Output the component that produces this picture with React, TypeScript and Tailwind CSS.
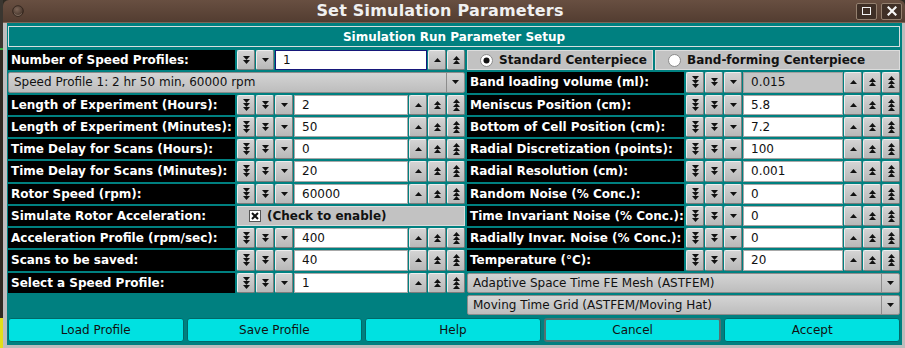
import React from 'react'

const FONT = { fontFamily: '"DejaVu Sans", "Liberation Sans", sans-serif' }

function Arrows({ n, up }: { n: number; up?: boolean }) {
  const tris = []
  for (let i = 0; i < n; i++) {
    const y = i * 4
    tris.push(
      <polygon
        key={i}
        points={up ? `3.5,${y} 0,${y + 4} 7,${y + 4}` : `0,${y} 7,${y} 3.5,${y + 4}`}
        fill="#111"
      />
    )
  }
  return (
    <svg width="7" height={n * 4} viewBox={`0 0 7 ${n * 4}`}>
      {tris}
    </svg>
  )
}

function StepButton({ n, up }: { n: number; up?: boolean }) {
  return (
    <div className="w-[18px] shrink-0 flex items-center justify-center rounded-[2px] bg-gradient-to-b from-[#d4d4d4] to-[#b8b8b8] border border-t-[#ededed] border-l-[#ededed] border-r-[#7c7c7c] border-b-[#7c7c7c]">
      <Arrows n={n} up={up} />
    </div>
  )
}

interface CounterProps {
  value: string
  steps?: number
  focused?: boolean
  disabled?: boolean
}

function Counter({ value, steps = 3, focused, disabled }: CounterProps) {
  const downs = steps === 3 ? [3, 2, 1] : [2, 1]
  const ups = steps === 3 ? [1, 2, 3] : [1, 2]
  return (
    <div className="flex gap-[1px] h-full">
      {downs.map((n) => (
        <StepButton key={'d' + n} n={n} />
      ))}
      <div
        className={
          'flex-1 min-w-0 flex items-center pl-[7px] text-[12px] text-[#111] ' +
          (focused
            ? 'bg-white border border-[#17177a]'
            : disabled
              ? 'bg-[#c4c4c4] border border-[#a0a0a0]'
              : 'bg-white border border-[#a8a8a8]')
        }
      >
        {value}
      </div>
      {ups.map((n) => (
        <StepButton key={'u' + n} n={n} up />
      ))}
    </div>
  )
}

function Label({ text }: { text: string }) {
  return (
    <div className="bg-black text-white font-bold text-[12px] pl-[3px] flex items-center whitespace-nowrap overflow-hidden">
      {text}
    </div>
  )
}

function Combo({ text }: { text: string }) {
  return (
    <div className="flex h-full rounded-[2px] bg-gradient-to-b from-[#d4d4d4] to-[#bdbdbd] border border-[#8c8c8c]">
      <div className="flex-1 flex items-center pl-[5px] text-[12px] text-[#111] whitespace-nowrap">{text}</div>
      <div className="w-[18px] border-l border-[#8c8c8c] flex items-center justify-center">
        <Arrows n={1} />
      </div>
    </div>
  )
}

function LeftRow({ label, value, steps, focused }: { label: string; value: string; steps?: number; focused?: boolean }) {
  return (
    <div className="grid grid-cols-[227px_228px] gap-x-[2px]">
      <Label text={label} />
      <Counter value={value} steps={steps} focused={focused} />
    </div>
  )
}

function RightRow({ label, value, disabled }: { label: string; value: string; disabled?: boolean }) {
  return (
    <div className="grid grid-cols-[217px_214px] gap-x-[2px]">
      <Label text={label} />
      <Counter value={value} disabled={disabled} />
    </div>
  )
}

function Radio({ checked, text, className }: { checked?: boolean; text: string; className: string }) {
  return (
    <div className={'flex items-center gap-[6px] pl-[12px] bg-[#c2c2c2] border border-[#dcdcdc] ' + className}>
      <svg width="13" height="13" viewBox="0 0 13 13">
        <circle cx="6.5" cy="6.5" r="6" fill="#fff" stroke="#8a8a8a" />
        {checked && <circle cx="6.5" cy="6.5" r="3" fill="#111" />}
      </svg>
      <span className="font-bold text-[12px] text-[#111] whitespace-nowrap">{text}</span>
    </div>
  )
}

const LEFT_ROWS = [
  ['Length of Experiment (Hours):', '2'],
  ['Length of Experiment (Minutes):', '50'],
  ['Time Delay for Scans (Hours):', '0'],
  ['Time Delay for Scans (Minutes):', '20'],
  ['Rotor Speed (rpm):', '60000'],
]

const RIGHT_ROWS = [
  ['Meniscus Position (cm):', '5.8'],
  ['Bottom of Cell Position (cm):', '7.2'],
  ['Radial Discretization (points):', '100'],
  ['Radial Resolution (cm):', '0.001'],
  ['Random Noise (% Conc.):', '0'],
  ['Time Invariant Noise (% Conc.):', '0'],
  ['Radially Invar. Noise (% Conc.):', '0'],
  ['Temperature (°C):', '20'],
]

export default function App() {
  return (
    <div className="w-[905px] h-[348px] flex overflow-hidden bg-[#2e2a22]" style={FONT}>
      {/* desktop sliver */}
      <div className="w-[3px] flex flex-col">
        <div className="h-[48px] bg-[#3a3630]" />
        <div className="h-[2px] bg-[#3cb043]" />
        <div className="flex-1 bg-[#2e2a22]" />
        <div className="h-[30px] bg-[#e2df1a]" />
      </div>

      <div className="w-[902px] h-[348px] flex flex-col">
        {/* title bar */}
        <div className="h-[23px] shrink-0 rounded-t-[6px] bg-gradient-to-b from-[#684f41] to-[#533d31] border-b border-[#7d6556] flex items-center">
          <svg width="12" height="12" viewBox="0 0 12 12" className="ml-[9px]">
            <defs>
              <radialGradient id="knob" cx="0.4" cy="0.35" r="0.7">
                <stop offset="0" stopColor="#7d6658" />
                <stop offset="1" stopColor="#3e2e25" />
              </radialGradient>
            </defs>
            <circle cx="6" cy="6" r="5.3" fill="url(#knob)" stroke="#2b1f18" strokeWidth="0.8" />
            <path d="M2.2 8.5 A4.6 4.6 0 0 0 9.8 8.5" fill="none" stroke="#9a8577" strokeWidth="0.7" />
          </svg>
          <div className="flex-1 text-center text-[16px] font-bold text-[#f0f0f0] tracking-[0.2px]">Set Simulation Parameters</div>
          <div className="flex gap-[4px] mr-[3px]">
            <div className="w-[21px] h-[17px] rounded-[2px] border border-[#94806f] bg-[#3f2f26] flex items-center justify-center">
              <div className="w-[9px] h-[8px] border-[1.5px] border-[#f4f4f4]" />
            </div>
            <div className="w-[21px] h-[17px] rounded-[2px] border border-[#94806f] bg-[#3f2f26] flex items-center justify-center">
              <svg width="10" height="10" viewBox="0 0 10 10">
                <path d="M1.5 1.5 L8.5 8.5 M8.5 1.5 L1.5 8.5" stroke="#f6f6f6" strokeWidth="2.2" strokeLinecap="square" />
              </svg>
            </div>
          </div>
        </div>

        {/* body */}
        <div className="flex-1 flex flex-col bg-[#008080] border-l-[4px] border-r-[3px] border-b-[3px] border-l-[#bdbdbd] border-r-[#bdbdbd] border-b-[#bdbdbd] pl-[1px] pr-[2px] pt-[3px] pb-[1px]">
          <div className="h-[21px] shrink-0 flex items-center justify-center border border-[#d6dede] text-white font-bold text-[12px]">
            Simulation Run Parameter Setup
          </div>

          <div className="mt-[3px] h-[265px] grid grid-cols-[457px_433px] gap-x-[2px]">
            <div className="grid grid-rows-[repeat(12,1fr)] gap-y-[2px]">
              <LeftRow label="Number of Speed Profiles:" value="1" steps={2} focused />
              <Combo text="Speed Profile 1: 2 hr 50 min, 60000 rpm" />
              {LEFT_ROWS.map(([l, v]) => (
                <LeftRow key={l} label={l} value={v} />
              ))}
              <div className="grid grid-cols-[227px_228px] gap-x-[2px]">
                <Label text="Simulate Rotor Acceleration:" />
                <div className="bg-[#c2c2c2] border border-[#dcdcdc] flex items-center pl-[11px] gap-[6px]">
                  <svg width="12" height="12" viewBox="0 0 12 12">
                    <rect x="0.5" y="0.5" width="11" height="11" fill="#fff" stroke="#555" />
                    <path d="M3 3 L9 9 M9 3 L3 9" stroke="#111" strokeWidth="2" />
                  </svg>
                  <span className="font-bold text-[12px] text-[#111]">(Check to enable)</span>
                </div>
              </div>
              <LeftRow label="Acceleration Profile (rpm/sec):" value="400" />
              <LeftRow label="Scans to be saved:" value="40" />
              <LeftRow label="Select a Speed Profile:" value="1" />
            </div>

            <div className="grid grid-rows-[repeat(12,1fr)] gap-y-[2px]">
              <div className="flex gap-[2px]">
                <Radio checked text="Standard Centerpiece" className="w-[186px]" />
                <Radio text="Band-forming Centerpiece" className="flex-1" />
              </div>
              <RightRow label="Band loading volume (ml):" value="0.015" disabled />
              {RIGHT_ROWS.map(([l, v]) => (
                <RightRow key={l} label={l} value={v} />
              ))}
              <Combo text="Adaptive Space Time FE Mesh (ASTFEM)" />
              <Combo text="Moving Time Grid (ASTFEM/Moving Hat)" />
            </div>
          </div>

          <div className="mt-[3px] h-[24px] shrink-0 flex gap-[3px]">
            {['Load Profile', 'Save Profile', 'Help', 'Cancel', 'Accept'].map((b) => (
              <div
                key={b}
                className={
                  'flex-1 flex items-center justify-center rounded-[3px] bg-[#00e1e1] text-[12px] text-[#111] ' +
                  (b === 'Cancel' ? 'border-2 border-[#547070]' : 'border border-[#006a6a]')
                }
              >
                {b}
              </div>
            ))}
          </div>
        </div>
      </div>
    </div>
  )
}
